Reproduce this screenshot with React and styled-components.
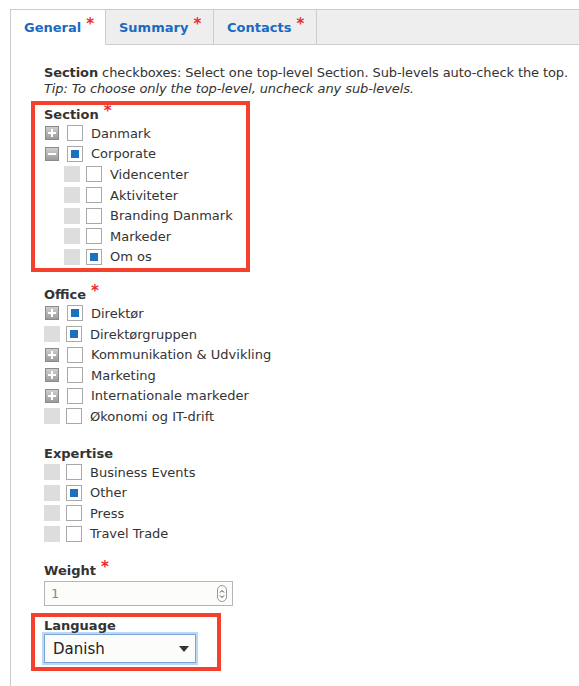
import React from 'react'
import styled, { createGlobalStyle } from 'styled-components'

const GlobalStyle = createGlobalStyle`
  html, body {
    margin: 0;
    padding: 0;
    background: #ffffff;
  }
  body {
    font-family: "DejaVu Sans", "Open Sans", sans-serif;
    color: #333333;
  }
`

const Page = styled.div`
  width: 579px;
  height: 686px;
  overflow: hidden;
  padding-top: 9px;
  padding-left: 10px;
  box-sizing: border-box;
`

const TabBar = styled.div`
  display: flex;
  height: 36px;
  border-top: 1px solid #cccccc;
  border-left: 1px solid #cccccc;
  background: #eeeeee;
  box-sizing: border-box;
`

const Tab = styled.div`
  display: flex;
  align-items: center;
  padding: 0 13px;
  font-weight: 700;
  font-size: 13px;
  color: #1b6ac1;
  border-right: 1px solid #cccccc;
  border-bottom: 1px solid ${p => (p.$active ? 'transparent' : '#cccccc')};
  background: ${p => (p.$active ? '#ffffff' : '#eeeeee')};
  width: ${p => p.$w}px;
  box-sizing: border-box;
`

const TabFill = styled.div`
  flex: 1;
  border-bottom: 1px solid #cccccc;
`

const Star = styled.span`
  color: #ee2b2b;
  font-weight: 700;
  font-size: 15px;
  line-height: 0;
  margin-left: 5px;
  position: relative;
  top: -3px;
`

const Panel = styled.div`
  border-left: 1px solid #cccccc;
  padding: 20px 0 20px 33px;
  min-height: 640px;
  box-sizing: border-box;
`

const Intro = styled.p`
  margin: 0 0 8px;
  font-size: 13px;
  letter-spacing: -0.1px;
  line-height: 16px;
  b {
    font-weight: 700;
  }
  i {
    display: block;
  }
`

const Group = styled.div`
  margin-bottom: 18px;
  ${p => p.$framed && `
    outline: 4px solid #f4402c;
    margin-left: -9px;
    padding: 1px 0 1px 9px;
    width: 202px;
  `}
`

const Label = styled.div`
  font-size: 13px;
  font-weight: 700;
  height: ${p => p.$lh || 17}px;
  line-height: ${p => p.$lh || 17}px;
  color: #333333;
`

const Row = styled.div`
  display: flex;
  align-items: center;
  height: 20.6px;
  padding-left: ${p => (p.$level || 0) * 20}px;
  font-size: 13px;
`

const Toggle = styled.span`
  width: 14px;
  height: 14px;
  box-sizing: border-box;
  border: 1px solid #8a8a8a;
  background: linear-gradient(#cfcfcf, #9c9c9c);
  display: inline-flex;
  align-items: center;
  justify-content: center;
  margin: 0 8px 0 1px;
`

const Blank = styled.span`
  width: 16px;
  height: 16px;
  background: #dddddd;
  margin-right: 6px;
`

const Box = styled.span`
  width: 16px;
  height: 16px;
  box-sizing: border-box;
  border: 1px solid #a9a9a9;
  background: #ffffff;
  display: inline-flex;
  align-items: center;
  justify-content: center;
  margin-right: 8px;
  &::after {
    content: '';
    width: 8px;
    height: 8px;
    background: ${p => (p.$checked ? '#1d6fbf' : 'transparent')};
  }
`

const Text = styled.span`
  color: #333333;
`

const NumberInput = styled.div`
  display: flex;
  align-items: center;
  justify-content: space-between;
  width: 189px;
  height: 25px;
  margin-top: 2px;
  box-sizing: border-box;
  border: 1px solid #b5b5b5;
  background: #fcfcfa;
  padding: 0 5px 0 6px;
  font-size: 13px;
  color: #888888;
`

const Spinner = styled.span`
  width: 10px;
  height: 17px;
  box-sizing: border-box;
  border: 1px solid #999999;
  border-radius: 5px;
  display: flex;
  align-items: center;
  justify-content: center;
`

const LangGroup = styled.div`
  outline: 4px solid #f4402c;
  margin-left: -9px;
  padding: 1px 0 4px 9px;
  width: 173px;
  margin-top: 11px;
`

const Select = styled.div`
  display: flex;
  align-items: center;
  justify-content: space-between;
  width: 152px;
  height: 29px;
  box-sizing: border-box;
  border: 1px solid #7aa3d6;
  box-shadow: 0 0 0 2px #bcd8f5;
  background: #fcfcfa;
  padding: 0 6px 0 8px;
  font-size: 15px;
  color: #222222;
`

const Caret = styled.span`
  width: 0;
  height: 0;
  border-left: 5px solid transparent;
  border-right: 5px solid transparent;
  border-top: 6px solid #333333;
`

function Expander ({ open }) {
  return (
    <Toggle>
      <svg width="8" height="8" viewBox="0 0 8 8">
        <rect x="0" y="3" width="8" height="2" fill="#fff" />
        {!open && <rect x="3" y="0" width="2" height="8" fill="#fff" />}
      </svg>
    </Toggle>
  )
}

function Item ({ label, checked, toggle, level }) {
  return (
    <Row $level={level}>
      {toggle ? <Expander open={toggle === 'open'} /> : <Blank />}
      <Box $checked={checked} />
      <Text>{label}</Text>
    </Row>
  )
}

export default function App () {
  return (
    <Page>
      <GlobalStyle />
      <TabBar>
        <Tab $active $w={95}>General<Star>*</Star></Tab>
        <Tab $w={108}>Summary<Star>*</Star></Tab>
        <Tab $w={103}>Contacts<Star>*</Star></Tab>
        <TabFill />
      </TabBar>
      <Panel>
        <Intro>
          <b>Section</b> checkboxes: Select one top-level Section. Sub-levels auto-check the top.
          <i>Tip: To choose only the top-level, uncheck any sub-levels.</i>
        </Intro>

        <Group $framed>
          <Label>Section<Star>*</Star></Label>
          <Item label="Danmark" toggle="closed" />
          <Item label="Corporate" toggle="open" checked />
          <Item label="Videncenter" level={1} />
          <Item label="Aktiviteter" level={1} />
          <Item label="Branding Danmark" level={1} />
          <Item label="Markeder" level={1} />
          <Item label="Om os" level={1} checked />
        </Group>

        <Group>
          <Label>Office<Star>*</Star></Label>
          <Item label="Direktør" toggle="closed" checked />
          <Item label="Direktørgruppen" checked />
          <Item label="Kommunikation & Udvikling" toggle="closed" />
          <Item label="Marketing" toggle="closed" />
          <Item label="Internationale markeder" toggle="closed" />
          <Item label="Økonomi og IT-drift" />
        </Group>

        <Group>
          <Label>Expertise</Label>
          <Item label="Business Events" />
          <Item label="Other" checked />
          <Item label="Press" />
          <Item label="Travel Trade" />
        </Group>

        <div>
          <Label>Weight<Star>*</Star></Label>
          <NumberInput>
            <span>1</span>
            <Spinner>
              <svg width="6" height="12" viewBox="0 0 6 12">
                <path d="M1 4.5 L3 2.5 L5 4.5 M1 7.5 L3 9.5 L5 7.5" stroke="#444" strokeWidth="1" fill="none" />
              </svg>
            </Spinner>
          </NumberInput>
        </div>

        <LangGroup>
          <Label $lh={16}>Language</Label>
          <Select>
            <span>Danish</span>
            <Caret />
          </Select>
        </LangGroup>
      </Panel>
    </Page>
  )
}
